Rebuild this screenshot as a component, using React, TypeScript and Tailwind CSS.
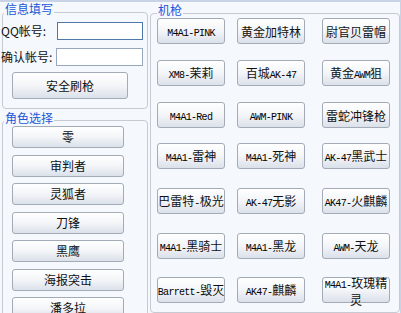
import React from 'react';

const guns: string[] = [
  'M4A1-PINK', '黄金加特林', '尉官贝雷帽',
  'XM8-茉莉', '百城AK-47', '黄金AWM狙',
  'M4A1-Red', 'AWM-PINK', '雷蛇冲锋枪',
  'M4A1-雷神', 'M4A1-死神', 'AK-47黑武士',
  '巴雷特-极光', 'AK-47无影', 'AK47-火麒麟',
  'M4A1-黑骑士', 'M4A1-黑龙', 'AWM-天龙',
  'Barrett-毁灭', 'AK47-麒麟', 'M4A1-玫瑰精\n灵',
];

const roles = ['零', '审判者', '灵狐者', '刀锋', '黑鹰', '海报突击', '潘多拉'];

const font = { fontFamily: '"Noto Sans CJK SC", sans-serif' };

// split latin runs from CJK runs so latin can use the small mono face
const Label: React.FC<{ text: string }> = ({ text }) => {
  const parts = text.match(/[\x00-\x7f]+|[^\x00-\x7f]+/g) || [];
  return (
    <span className="whitespace-pre leading-[12px] text-center">
      {parts.map((p, i) =>
        /[\x00-\x7f]/.test(p) ? (
          <span key={i} className="font-['Liberation_Mono',monospace] text-[10px] tracking-[-0.7px] text-black">
            {p}
          </span>
        ) : (
          <span key={i} className="font-['Noto_Sans_CJK_SC',sans-serif] text-[12px] text-[#111]">
            {p}
          </span>
        )
      )}
    </span>
  );
};

const btn =
  'flex items-center justify-center rounded-[3px] border border-[#a3abb6] bg-gradient-to-b from-white via-[#f3f5f8] to-[#dbe1ea] p-0';

const Title: React.FC<{ children: React.ReactNode; className?: string }> = ({ children, className }) => (
  <div className={`w-fit bg-[#f5f8fc] px-[1px] text-[12px] leading-[12px] text-[#2157d8] ${className}`}>{children}</div>
);

const App: React.FC = () => {
  return (
    <div className="h-[313px] w-[401px] overflow-hidden bg-[#c8d4e5] pt-[2px] pr-[1px]" style={font}>
      <div className="flex h-full gap-[2px] bg-[#f5f8fc] pl-[2px]">
        {/* left column */}
        <div className="flex w-[146px] flex-col">
          <div className="mt-[10px] h-[97px] shrink-0 rounded-[4px] border border-[#c6cbd3]">
            <Title className="-mt-[10px] ml-[1px]">信息填写</Title>
            <div className="mt-[7px] flex flex-col pr-[4px]">
              <div className="flex h-[18px] items-center justify-between">
                <span className="-ml-[2px] text-[12px] text-[#111]">QQ帐号:</span>
                <input className="h-[18px] w-[86px] border border-[#4f77a8] bg-white outline-none" />
              </div>
              <div className="mt-[8px] flex h-[18px] items-center justify-between">
                <span className="-ml-[2px] text-[12px] text-[#111]">确认帐号:</span>
                <input className="h-[18px] w-[87px] border border-[#97a8bd] bg-white outline-none" />
              </div>
              <button className={`${btn} mt-[6px] ml-[9px] h-[27px] w-[116px] text-[12px] text-[#111]`}>
                安全刷枪
              </button>
            </div>
          </div>
          <div className="mt-[11px] shrink-0 rounded-[4px] border border-[#c6cbd3] pb-[20px]">
            <Title className="-mt-[9px] ml-[1px]">角色选择</Title>
            <div className="mt-[2px] flex flex-col gap-[6.5px] pl-[9px]">
              {roles.map((r) => (
                <button key={r} className={`${btn} h-[22px] w-[112px] shrink-0 text-[12px] text-[#111]`}>
                  {r}
                </button>
              ))}
            </div>
          </div>
        </div>

        {/* right group */}
        <div className="mt-[11px] h-[300px] w-[250px] rounded-[4px] border border-[#c6cbd3]">
          <Title className="-mt-[10px] ml-[6px]">机枪</Title>
          <div className="mt-[2px] grid grid-cols-[80px_85px_68px] grid-rows-[42px_42px_41px_45px_45px_44px_27px] pl-[6px]">
            {guns.map((g) => (
              <button key={g} className={`${btn} h-[26px] w-[68px]`}>
                <Label text={g} />
              </button>
            ))}
          </div>
        </div>
      </div>
    </div>
  );
};

export default App;
